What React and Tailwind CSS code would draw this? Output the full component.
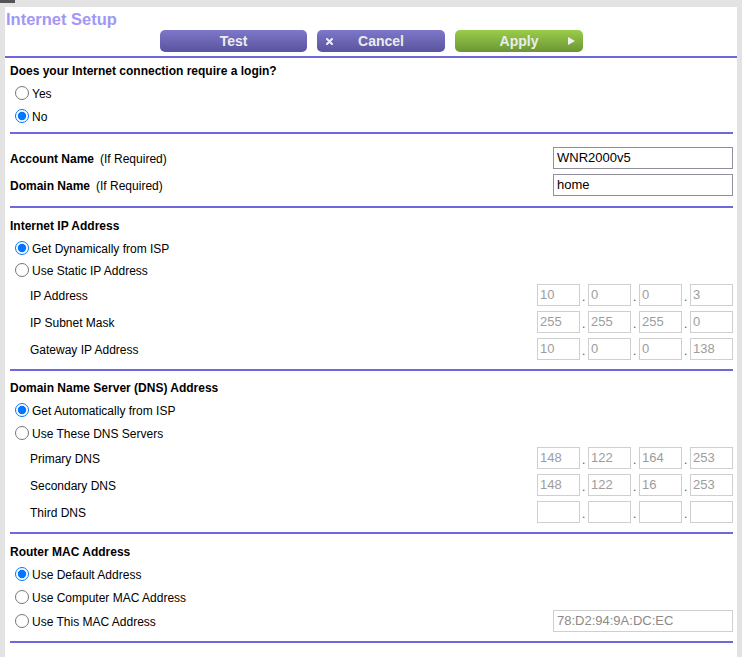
import React from 'react'

const font = { fontFamily: '"Liberation Sans", Arial, sans-serif' }

const Line = ({ full }) => (
  <div className={full ? 'h-[2px] bg-[#6f68da]' : 'ml-[5px] mr-[4px] h-[2px] bg-[#6f68da]'} />
)

const Radio = ({ label, checked, h = 'h-[23px]' }) => (
  <label className={`flex items-center ${h} pl-[10px]`}>
    <input type="radio" readOnly checked={checked} className="m-0 h-[14px] w-[14px]" />
    <span className="ml-[3px] pt-[2px] text-[12px] text-black">{label}</span>
  </label>
)

const Heading = ({ children, h = 'h-[22px]' }) => (
  <div className={`flex items-center ${h} pl-[5px] pt-[2px] text-[12px] font-bold text-black`}>{children}</div>
)

const IpRow = ({ label, values, h = 'h-[27px]' }) => (
  <div className={`flex items-center ${h} pl-[25px] pr-[4px]`}>
    <span className="flex-1 pt-[2px] text-[12px] text-black">{label}</span>
    {values.map((v, i) => (
      <React.Fragment key={i}>
        {i > 0 && <span className="flex h-[22px] w-[8px] items-end pb-[3px] pl-[2px] text-[12px] leading-none text-[#555]">.</span>}
        <div className="flex h-[22px] w-[43px] items-center border border-[#cfcfcf] px-[2px] text-[13px] text-[#9d9d9d]">{v}</div>
      </React.Fragment>
    ))}
  </div>
)

const TextRow = ({ bold, note, value }) => (
  <div className="flex h-[22px] items-center pl-[5px] pr-[4px]">
    <span className="flex-1 pt-[2px] text-[12px] text-black">
      <b>{bold}</b>
      <span className="ml-[6px]">{note}</span>
    </span>
    <div className="flex h-[22px] w-[180px] items-center border border-[#8f8f9d] px-[3px] text-[13px] text-black">{value}</div>
  </div>
)

const Button = ({ children, green, icon, arrow, w }) => (
  <div
    className={`relative flex h-[22px] ${w} items-center justify-center rounded-[5px] text-[14px] font-bold text-[#ececec] ${
      green ? 'bg-gradient-to-b from-[#9acd49] to-[#6b9635]' : 'bg-gradient-to-b from-[#7d78ca] to-[#5a539e]'
    }`}
  >
    {icon && (
      <svg className="absolute left-[9px] top-[8px]" width="7" height="7" viewBox="0 0 7 7">
        <path d="M1 1 L6 6 M6 1 L1 6" stroke="#f0f0f0" strokeWidth="2" strokeLinecap="round" />
      </svg>
    )}
    {children}
    {arrow && (
      <svg className="absolute right-[8px] top-[7px]" width="7" height="8" viewBox="0 0 7 8">
        <path d="M0 0 L7 4 L0 8 Z" fill="#f0f0f0" />
      </svg>
    )}
  </div>
)

export default function App() {
  return (
    <div className="relative min-h-[657px] w-[742px] overflow-hidden bg-[#e3e3e3] pl-[5px] pr-[5px] pt-[7px]" style={font}>
      <div className="absolute left-0 top-0 h-[3px] w-[15px] bg-[#555]" />
      <div className="min-h-[650px] bg-white">
        <div className="flex h-[20px] items-end pl-[1px] text-[16.5px] font-bold leading-none text-[#a197f6]">
          Internet Setup
        </div>
        <div className="mt-[3px] flex h-[22px] gap-[10px] pl-[155px]">
          <Button w="w-[147px]">Test</Button>
          <Button w="w-[128px]" icon>Cancel</Button>
          <Button w="w-[128px]" green arrow>Apply</Button>
        </div>
        <div className="h-[4px]" />
        <Line full />

        <div className="pt-[1px]">
          <Heading>Does your Internet connection require a login?</Heading>
          <Radio label="Yes" />
          <Radio label="No" checked />
          <div className="h-[5px]" />
        </div>
        <Line />

        <div className="flex flex-col gap-[5px] pb-[10px] pt-[13px]">
          <TextRow bold="Account Name" note="(If Required)" value="WNR2000v5" />
          <TextRow bold="Domain Name" note="(If Required)" value="home" />
        </div>
        <Line />

        <div className="pb-[7px] pt-[6px]">
          <Heading>Internet IP Address</Heading>
          <Radio label="Get Dynamically from ISP" checked />
          <Radio label="Use Static IP Address" h="h-[22px]" />
          <IpRow label="IP Address" values={['10', '0', '0', '3']} />
          <IpRow label="IP Subnet Mask" values={['255', '255', '255', '0']} />
          <IpRow label="Gateway IP Address" values={['10', '0', '0', '138']} />
        </div>
        <Line />

        <div className="pb-[7px] pt-[5px]">
          <Heading>Domain Name Server (DNS) Address</Heading>
          <Radio label="Get Automatically from ISP" checked />
          <Radio label="Use These DNS Servers" h="h-[23px]" />
          <IpRow label="Primary DNS" values={['148', '122', '164', '253']} />
          <IpRow label="Secondary DNS" values={['148', '122', '16', '253']} />
          <IpRow label="Third DNS" values={['', '', '', '']} />
        </div>
        <Line />

        <div className="pb-[8px] pt-[6px]">
          <Heading>Router MAC Address</Heading>
          <Radio label="Use Default Address" checked />
          <Radio label="Use Computer MAC Address" />
          <div className="flex h-[25px] items-center pr-[4px]">
            <div className="flex-1">
              <Radio label="Use This MAC Address" />
            </div>
            <div className="flex h-[22px] w-[180px] items-center border border-[#cfcfcf] px-[3px] text-[13px] text-[#8a8a8a]">
              78:D2:94:9A:DC:EC
            </div>
          </div>
        </div>
        <Line />
      </div>
    </div>
  )
}
